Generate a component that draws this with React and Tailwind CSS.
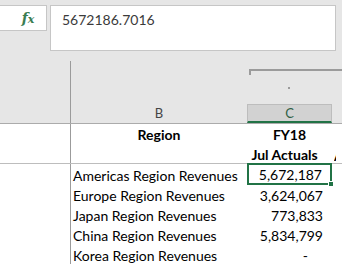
export default function App() {
  const rows = [
    { name: "Americas Region Revenues", value: "5,672,187", selected: true },
    { name: "Europe Region Revenues", value: "3,624,067" },
    { name: "Japan Region Revenues", value: "773,833" },
    { name: "China Region Revenues", value: "5,834,799" },
    { name: "Korea Region Revenues", value: "-", dash: true },
  ];

  return (
    <div className="w-[342px] h-[273px] overflow-hidden bg-white font-['Lato','Liberation_Sans',sans-serif] text-[14px] text-black">
      {/* formula bar */}
      <div className="bg-[#e6e6e6] pt-[5px] h-[50px] flex items-start">
        <div className="w-[47px] h-[26px] bg-white border-t border-r border-b border-[#c6c6c6] flex items-center justify-center pl-[10px]">
          <span className="font-['DejaVu_Serif',serif] italic font-bold text-[14px] leading-none text-[#3a7d52]">
            f<span className="text-[11px]">x</span>
          </span>
        </div>
        <div className="ml-[3px] w-[286px] h-[46px] bg-white border border-[#c6c6c6] pl-[11px] pt-[5px] text-[14px] text-[#3b3b3b] leading-[18px]">
          5672186.7016
        </div>
      </div>

      {/* outline area */}
      <div className="bg-[#e6e6e6] h-[54px] flex">
        <div className="w-[71px] pt-[11px]">
          <div className="h-full border-r border-[#9b9b9b]" />
        </div>
        <div className="flex-1">
          <div className="ml-[178px] mt-[19px] h-[6px] border-t-2 border-l-2 border-[#9b9b9b]" />
          <div className="ml-[217px] mt-[12px] w-[2px] h-[2px] bg-[#9b9b9b]" />
        </div>
      </div>

      {/* column headers */}
      <div className="bg-[#e6e6e6] h-[20px] flex border-b border-[#ababab] text-[13px] leading-none">
        <div className="w-[71px] border-r border-[#9b9b9b]" />
        <div className="w-[176px] flex items-center justify-center text-[#444]">B</div>
        <div className="w-[85px] bg-[#d2d2d2] border-t border-l border-r border-[#bdbdbd] border-b-2 border-b-[#217346] flex items-center justify-center text-[#2f5f45]">
          C
        </div>
        <div className="flex-1" />
      </div>

      {/* header rows */}
      <div className="flex h-[20px] font-bold">
        <div className="w-[71px] border-r border-[#9b9b9b]" />
        <div className="w-[176px] flex items-center justify-center pt-[1px]">Region</div>
        <div className="w-[85px] flex items-center justify-center pt-[1px]">FY18</div>
        <div className="flex-1" />
      </div>
      <div className="flex h-[20px] font-bold border-b border-[#bdbdbd]">
        <div className="w-[71px] border-r border-[#9b9b9b]" />
        <div className="w-[176px]" />
        <div className="w-[85px] flex items-center justify-center pt-[1px] pr-[10px]">Jul Actuals</div>
        <div className="flex-1 overflow-hidden pl-[2px] pt-[1px]">
          <div className="w-[2px] overflow-hidden">A</div>
        </div>
      </div>

      {/* data rows */}
      {rows.map((r) => (
        <div key={r.name} className="flex h-[20px]">
          <div className="w-[71px] border-r border-[#9b9b9b]" />
          <div className="w-[176px] flex items-center pl-[2px] pt-[2px] whitespace-nowrap">{r.name}</div>
          <div
            className={
              r.selected
                ? "relative w-[85px] h-[22px] -mt-px shrink-0 border-2 border-[#217346] flex items-center justify-end pr-[8px] pt-[1px]"
                : r.dash
                ? "w-[85px] flex items-center justify-end pr-[24px] pt-[2px]"
                : "w-[85px] flex items-center justify-end pr-[9px] pt-[2px]"
            }
          >
            {r.value}
            {r.selected && (
              <div className="absolute right-[-4px] bottom-[-4px] w-[6px] h-[6px] bg-[#217346] border border-white" />
            )}
          </div>
          <div className="flex-1" />
        </div>
      ))}
    </div>
  );
}
